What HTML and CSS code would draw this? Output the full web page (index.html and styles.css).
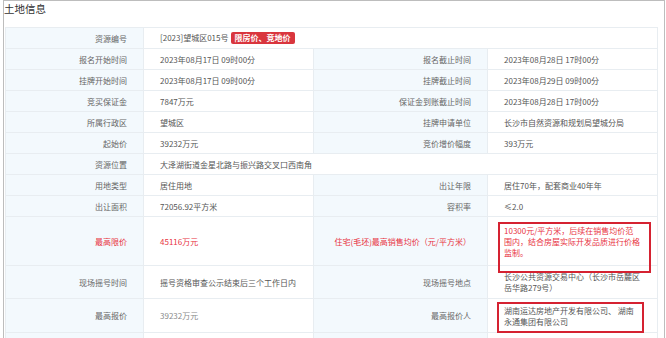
FILE: index.html
```html
<!DOCTYPE html>
<html lang="zh-CN">
<head>
<meta charset="utf-8">
<title>土地信息</title>
<link rel="stylesheet" href="styles.css">
</head>
<body>
<div class="panel">
  <div class="title">土地信息</div>
  <table class="info">
    <colgroup><col class="c1"><col class="c2"><col class="c3"><col class="c4"></colgroup>
    <tr class="r"><th>资源编号</th><td colspan="3">[2023]望城区015号<span class="tag">限房价、竞地价</span></td></tr>
    <tr class="r"><th>报名开始时间</th><td>2023年08月17日 09时00分</td><th>报名截止时间</th><td>2023年08月28日 17时00分</td></tr>
    <tr class="r"><th>挂牌开始时间</th><td>2023年08月17日 09时00分</td><th>挂牌截止时间</th><td>2023年08月29日 09时00分</td></tr>
    <tr class="r"><th>竞买保证金</th><td>7847万元</td><th>保证金到账截止时间</th><td>2023年08月28日 17时00分</td></tr>
    <tr class="r"><th>所属行政区</th><td>望城区</td><th>挂牌申请单位</th><td>长沙市自然资源和规划局望城分局</td></tr>
    <tr class="r"><th>起始价</th><td>39232万元</td><th>竞价增价幅度</th><td>393万元</td></tr>
    <tr class="r"><th>资源位置</th><td colspan="3">大泽湖街道金星北路与振兴路交叉口西南角</td></tr>
    <tr class="r"><th>用地类型</th><td>居住用地</td><th>出让年限</th><td>居住70年，配套商业40年年</td></tr>
    <tr class="r"><th>出让面积</th><td>72056.92平方米</td><th>容积率</th><td>≤2.0</td></tr>
    <tr class="t1 red"><th>最高限价</th><td>45116万元</td><th>住宅(毛坯)最高销售均价（元/平方米）</th><td class="boxed multi">10300元/平方米，后续在销售均价范<br>围内，结合房屋实际开发品质进行价格<br>监制。<span class="mark m1"></span></td></tr>
    <tr class="t2"><th>现场摇号时间</th><td>摇号资格审查公示结束后三个工作日内</td><th>现场摇号地点</th><td class="multi">长沙公共资源交易中心（长沙市岳麓区<br>岳华路279号）</td></tr>
    <tr class="t3"><th>最高报价</th><td class="light">39232万元</td><th>最高报价人</th><td class="boxed multi">湖南运达房地产开发有限公司、 湖南<br>永通集团有限公司<span class="mark m2"></span></td></tr>
    <tr class="r"><th></th><td></td><th></th><td></td></tr>
  </table>
</div>
</body>
</html>
```

FILE: styles.css
```css
html, body {
  margin: 0;
  padding: 0;
  overflow: hidden;
  background: #fff;
}
body {
  font-family: "Noto Sans CJK SC", "Microsoft YaHei", sans-serif;
}
.panel {
  margin-left: 3px;
  width: 660px;
  height: 400px;
  border: 1px solid #bdbdbd;
  border-bottom: none;
}
.title {
  height: 26px;
  line-height: 16px;
  font-size: 10.5px;
  color: #333;
}
.info {
  margin-left: 1px;
  width: 652px;
  border-collapse: collapse;
  table-layout: fixed;
  font-size: 8px;
}
.c1 { width: 138px; }
.c2 { width: 170px; }
.c3 { width: 174px; }
.c4 { width: 170px; }
.info th, .info td {
  border: 1px solid #e8edf1;
  padding: 0;
  vertical-align: middle;
  line-height: 11px;
}
.info th {
  background: #f3f9fd;
  text-align: right;
  padding-right: 16px;
  font-weight: normal;
  color: #666;
}
.info td {
  text-align: left;
  padding-left: 16px;
  color: #555;
}
.r { height: 21px; }
.t1 { height: 49px; }
.t2 { height: 33px; }
.t3 { height: 34px; }
.red th, .red td { color: #e8333f; }
.info td.light { color: #8a8a8a; }
.tag {
  display: inline-block;
  margin-left: 2px;
  padding: 0 4px;
  height: 12px;
  line-height: 12px;
  border-radius: 2px;
  background: #d9363e;
  color: #fff;
  font-weight: bold;
  vertical-align: middle;
}
.boxed { position: relative; }
.mark {
  position: absolute;
  border: 2px solid #d52231;
}
.m1 { left: 10px; top: 5px; width: 149px; height: 47px; }
.m2 { left: 9px; top: 3px; width: 143px; height: 27px; }
```
